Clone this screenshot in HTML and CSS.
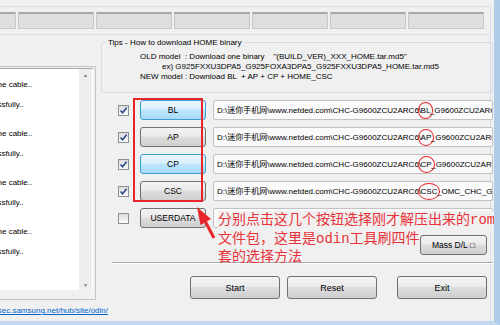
FILE: index.html
```html
<!DOCTYPE html>
<html lang="en">
<head>
  <meta charset="UTF-8">
  <meta name="viewport" content="width=device-width, initial-scale=1.0">
  <title>Odin3</title>
  <link rel="stylesheet" href="styles.css">
</head>
<body>

<div class="window">
  <div class="frame">
    <div class="status">
      <div class="slot"></div>
      <div class="slot"></div>
      <div class="slot"></div>
      <div class="slot"></div>
      <div class="slot"></div>
      <div class="slot"></div>
      <div class="slot"></div>
    </div>

    <div class="main">
      <div class="left">
        <div class="log">
          <div class="list">
            <div class="lines">
              <div class="ln">&lt;OSM&gt; Check MD5.. Do not unplug the cable..</div>
              <div class="ln">&lt;OSM&gt; Please wait..</div>
              <div class="ln">&lt;OSM&gt; Checking MD5 finished Sucessfully..</div>
              <div class="ln">&lt;OSM&gt; Leave CS..</div>
              <div class="ln">&lt;OSM&gt; Enter CS for MD5..</div>
              <div class="ln">&lt;OSM&gt; Check MD5.. Do not unplug the cable..</div>
              <div class="ln">&lt;OSM&gt; Please wait..</div>
              <div class="ln">&lt;OSM&gt; Checking MD5 finished Sucessfully..</div>
              <div class="ln">&lt;OSM&gt; Leave CS..</div>
              <div class="ln">&lt;OSM&gt; Enter CS for MD5..</div>
              <div class="ln">&lt;OSM&gt; Check MD5.. Do not unplug the cable..</div>
              <div class="ln">&lt;OSM&gt; Please wait..</div>
              <div class="ln">&lt;OSM&gt; Checking MD5 finished Sucessfully..</div>
              <div class="ln">&lt;OSM&gt; Leave CS..</div>
              <div class="ln">&lt;OSM&gt; Enter CS for MD5..</div>
              <div class="ln">&lt;OSM&gt; Check MD5.. Do not unplug the cable..</div>
              <div class="ln">&lt;OSM&gt; Please wait..</div>
              <div class="ln">&lt;OSM&gt; Checking MD5 finished Sucessfully..</div>
            </div>
            <div class="scroll">
              <span class="arr">&#9650;</span>
              <span class="arr">&#9660;</span>
            </div>
          </div>
        </div>
        <div class="linkbox">
          <a class="link" href="#">http://mobilerndhub.sec.samsung.net/hub/site/odin/</a>
        </div>
      </div>

      <div class="right">
        <div class="tips">
          <div class="tips-title">Tips - How to download HOME binary</div>
          <div class="tip">OLD model  : Download one binary    "(BUILD_VER)_XXX_HOME.tar.md5"</div>
          <div class="tip ex">ex) G925FXXU3DPA5_G925FOXA3DPA5_G925FXXU3DPA5_HOME.tar.md5</div>
          <div class="tip">NEW model : Download BL  + AP + CP + HOME_CSC</div>
        </div>

        <div class="files">
          <div class="row">
            <span class="check on"><svg viewBox="0 0 9 9"><path d="M1.5 4.5 L3.6 6.8 L7.6 1.8"/></svg></span>
            <button class="btn hot">BL</button>
            <div class="path">D:\迷你手机网\www.netded.com\CHC-G9600ZCU2ARC6\<span class="mark">BL</span>_G9600ZCU2ARC6_CL13403419_QB17239131_REV00_user_low_ship.tar.md5</div>
          </div>
          <div class="row">
            <span class="check on"><svg viewBox="0 0 9 9"><path d="M1.5 4.5 L3.6 6.8 L7.6 1.8"/></svg></span>
            <button class="btn">AP</button>
            <div class="path">D:\迷你手机网\www.netded.com\CHC-G9600ZCU2ARC6\<span class="mark">AP</span>_G9600ZCU2ARC6_CL13403419_QB17239131_REV00_user_low_ship_meta.tar.md5</div>
          </div>
          <div class="row">
            <span class="check on"><svg viewBox="0 0 9 9"><path d="M1.5 4.5 L3.6 6.8 L7.6 1.8"/></svg></span>
            <button class="btn hot">CP</button>
            <div class="path">D:\迷你手机网\www.netded.com\CHC-G9600ZCU2ARC6\<span class="mark">CP</span>_G9600ZCU2ARC6_CP9466135_CL13403419_QB17239131_REV00_user_low_ship.tar.md5</div>
          </div>
          <div class="row">
            <span class="check on"><svg viewBox="0 0 9 9"><path d="M1.5 4.5 L3.6 6.8 L7.6 1.8"/></svg></span>
            <button class="btn">CSC</button>
            <div class="path">D:\迷你手机网\www.netded.com\CHC-G9600ZCU2ARC6\<span class="mark">CSC</span>_OMC_CHC_G9600CHC2ARC6_CL13403419_QB17239131_REV00_user_low_ship.tar.md5</div>
          </div>
          <div class="row">
            <span class="check"></span>
            <button class="btn">USERDATA</button>
            <div class="path"></div>
          </div>
          <div class="mass-row">
            <button class="btn mass">Mass D/L &#9633;</button>
          </div>
        </div>

        <div class="sep"></div>

        <div class="actions">
          <button class="btn big">Start</button>
          <button class="btn big">Reset</button>
          <button class="btn big exit">Exit</button>
        </div>
      </div>
    </div>
  </div>

  <!-- annotation drawn over the screenshot -->
  <div class="redbox"></div>
  <div class="note">
    <div class="l1">分别点击这几个按钮选择刚才解压出来的rom</div>
    <div>文件包，这里是odin工具刷四件</div>
    <div>套的选择方法</div>
  </div>
  <svg class="arrow" width="30" height="45" viewBox="190 200 30 45">
    <line x1="214" y1="238" x2="205" y2="221" stroke="#e8262a" stroke-width="3"/>
    <polygon points="197,207 211,219 200.5,225" fill="#e8262a"/>
  </svg>
</div>

</body>
</html>
```

FILE: styles.css
```css
body {
  margin: 0;
  background-color: #f0f0f0;
  font-family: "Liberation Sans", Arial, "Noto Sans CJK SC", sans-serif;
  font-size: 8px;
  color: #000;
}

.window {
  position: relative;
  width: 500px;
  height: 325px;
  box-sizing: border-box;
  overflow: hidden;
  background-color: #f0f0f0;
  border-right: 6px solid #aecbe9;
  border-bottom: 4px solid #c3d8ee;
}

.frame {
  margin-top: 6px;
  width: 491px;
  height: 320px;
  box-sizing: border-box;
  border-top: 1px solid #d6e0e8;
  border-right: 1px solid #d6e0e8;
}

/* top status slots */
.status {
  display: flex;
  gap: 2px;
  margin-left: -60px;
  padding: 5px 0;
  border-bottom: 1px solid #d6e0e8;
}

.slot {
  flex: none;
  width: 76px;
  height: 17px;
  box-sizing: border-box;
  background-color: #dedede;
  border: 1px solid #c8c8c8;
  border-top: 2px solid #a9a9a9;
}

.main {
  display: flex;
}

/* log */
.left {
  width: 96px;
  flex: none;
}

.log {
  margin-top: 31px;
  height: 234px;
  box-sizing: border-box;
  border: 1px solid #c5c5c5;
  border-left: none;
  padding: 1px 2px 9px 0;
}

.list {
  display: flex;
  height: 100%;
  background-color: #fff;
  border-top: 1px solid #a8a8a8;
  box-sizing: border-box;
}

.lines {
  flex: 1;
  overflow: hidden;
  padding-top: 11px;
  font-size: 8px;
  line-height: 9.8px;
}

.ln {
  white-space: nowrap;
  margin-left: -135px;
}

.scroll {
  width: 13px;
  flex: none;
  margin-right: 1px;
  background-color: #eeeeee;
  display: flex;
  flex-direction: column;
  justify-content: space-between;
  align-items: center;
  padding: 3px 0 2px;
}

.arr {
  font-size: 5px;
  color: #7a7a7a;
}

.linkbox {
  display: flex;
  justify-content: flex-end;
  width: 108px;
  margin-top: 5px;
  line-height: 11px;
}

.link {
  white-space: nowrap;
  color: #0066cc;
  font-size: 8px;
}

/* right side */
.right {
  flex: 1;
  padding-left: 5px;
}

.tips {
  margin-top: 7px;
  height: 51px;
  box-sizing: border-box;
  border: 1px solid #d5dde3;
  border-radius: 3px;
  line-height: 10px;
}

.tips-title {
  display: table;
  margin: -6px 0 4px 5px;
  padding: 0 1px;
  line-height: 11px;
  background-color: #f0f0f0;
}

.tip {
  padding-left: 38px;
  white-space: pre;
}

.tip.ex {
  padding-left: 60px;
}

.files {
  padding-top: 7px;
}

.row {
  display: flex;
  align-items: center;
  height: 20px;
  margin-bottom: 7px;
  padding-left: 17px;
}

.check {
  width: 11px;
  height: 11px;
  box-sizing: border-box;
  border: 1px solid #8e8f8f;
  background: linear-gradient(#dcdcdc, #fbfbfb);
  margin-right: 11px;
  flex: none;
}

.check svg {
  display: block;
  width: 9px;
  height: 9px;
  fill: none;
  stroke: #2c4a8a;
  stroke-width: 1.6;
}

.btn {
  font-family: "Liberation Sans", Arial, sans-serif;
  font-size: 8.5px;
  color: #000;
  border: 1px solid #707070;
  border-radius: 3px;
  background: linear-gradient(#f3f3f3 0%, #ebebeb 45%, #dddddd 50%, #cfcfcf 100%);
  padding: 0;
}

.row .btn {
  width: 66px;
  height: 20px;
  flex: none;
  margin-right: 7px;
}

.btn.hot {
  border-color: #3c9fd3;
  background: linear-gradient(#eaf6fd 0%, #d9f0fc 45%, #bee6fd 50%, #a7d9f5 100%);
}

.path {
  width: 280px;
  height: 20px;
  box-sizing: border-box;
  border: 1px solid #c2c2c2;
  border-radius: 2px;
  background-color: #fafafa;
  padding: 3px 3px 0;
  white-space: nowrap;
  overflow: hidden;
  font-size: 8px;
}

.mark {
  border: 1.5px solid #e8262a;
  border-radius: 50%;
  padding: 3px 2px;
  margin: 0 -3.5px;
}

.mass-row {
  display: flex;
  justify-content: flex-end;
  padding-right: 6px;
  margin-top: 1px;
}

.btn.mass {
  width: 67px;
  height: 20px;
}

.sep {
  margin: 7px 0 0 11px;
  border-top: 1px solid #a9a9a9;
  border-bottom: 1px solid #fff;
}

.actions {
  display: flex;
  justify-content: flex-end;
  gap: 7px;
  padding-right: 6px;
  margin-top: 12px;
}

.btn.big {
  width: 90px;
  height: 23px;
  font-size: 9px;
}

.btn.exit {
  margin-left: 13px;
}

/* red annotation layer */
.redbox {
  position: absolute;
  left: 133px;
  top: 98px;
  width: 70px;
  height: 104px;
  box-sizing: border-box;
  border: 2px solid #e8262a;
}

.note {
  position: absolute;
  left: 209px;
  top: 211px;
  width: 300px;
  padding-left: 9px;
  font-family: "Liberation Mono", "Noto Sans CJK SC", monospace;
  font-size: 14px;
  line-height: 18.5px;
  color: #e8323a;
  white-space: nowrap;
}

.note .l1 {
  background-color: #f0f0f0;
}

.arrow {
  position: absolute;
  left: 190px;
  top: 200px;
}
```
